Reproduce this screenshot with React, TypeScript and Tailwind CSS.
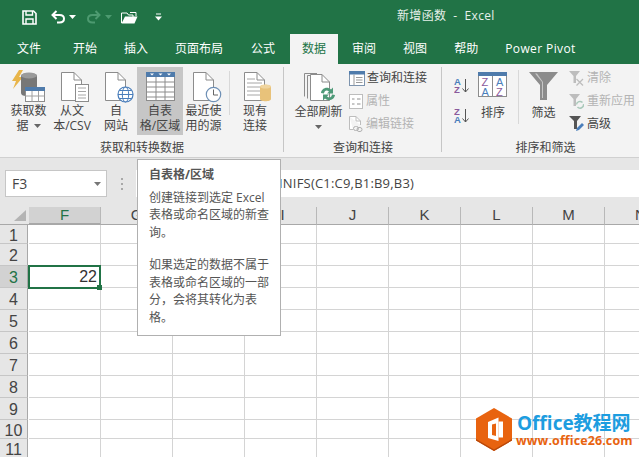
import React from "react";

const FONT = "font-['Open_Sans','Noto_Sans_CJK_SC',sans-serif]";

function Page({ lines = false }: { lines?: boolean }) {
  return (
    <>
      <path d="M.5.5H13L20.5 8V28.5H.5Z" fill="#fff" stroke="#8c8c8c" />
      <path d="M13 .5V8H20.5" fill="none" stroke="#8c8c8c" />
      {lines && <path d="M3 7H11M3 11H18M3 15H18M3 19H18M3 23H18" stroke="#a6a6a6" />}
    </>
  );
}

const Arrow = ({ c = "#666" }: { c?: string }) => (
  <svg width="7" height="4" viewBox="0 0 7 4" className="inline-block">
    <path d="M0 0H7L3.500 4Z" fill={c} />
  </svg>
);

function DataIcon() {
  return (
    <svg width="33" height="32" viewBox="0 0 33 32" className="-mt-[2px]">
      <path d="M7 0L0 11H4L1 19L11 7H7L11 0Z" fill="#e8b54a" />
      <path d="M9 6C9 2 25 2 25 6V26H14C11 26 9 25 9 23Z" fill="#777" />
      <ellipse cx="17" cy="5.500" rx="8" ry="3" fill="#9a9a9a" />
      <rect x="13.500" y="17.500" width="19" height="14" fill="#fff" stroke="#8c8c8c" />
      <rect x="13" y="17" width="20" height="4" fill="#4f7bab" />
      <path d="M13.500 26H32.500M20 21V31.500M26.500 21V31.500" stroke="#a0a0a0" />
    </svg>
  );
}

function FileIcon() {
  return (
    <svg width="29" height="31" viewBox="0 0 29 31" className="ml-[6px]">
      <Page />
      <rect x="14.500" y="12.500" width="13" height="17" fill="#fff" stroke="#8c8c8c" />
      <path d="M17 16H25M17 19.500H25M17 23H25M17 26H25" stroke="#a6a6a6" />
    </svg>
  );
}

function WebIcon() {
  return (
    <svg width="29" height="31" viewBox="0 0 29 31" className="ml-[7px]">
      <Page />
      <circle cx="20.500" cy="22.500" r="7.500" fill="#fff" stroke="#4a7ebb" strokeWidth="1.200" />
      <ellipse cx="20.500" cy="22.500" rx="3.200" ry="7.500" fill="none" stroke="#4a7ebb" />
      <path d="M13 22.500H28M14.500 18.500H26.500M14.500 26.500H26.500" stroke="#4a7ebb" />
    </svg>
  );
}

function TableIcon() {
  return (
    <svg width="29" height="29" viewBox="0 0 29 29">
      <rect x=".5" y=".5" width="28" height="28" fill="#fff" stroke="#8c8c8c" />
      <rect x="0" y="0" width="29" height="5" fill="#4f7bab" />
      <path d="M4 1.500H8L6 3.500ZM12.500 1.500H16.500L14.500 3.500ZM21 1.500H25L23 3.500Z" fill="#fff" />
      <path d="M.5 10H28.500M.5 15H28.500M.5 20H28.500M.5 25H28.500M10 5V28.500M19 5V28.500" stroke="#8c8c8c" />
    </svg>
  );
}

function RecentIcon() {
  return (
    <svg width="29" height="31" viewBox="0 0 29 31" className="ml-[8px]">
      <Page />
      <circle cx="20.500" cy="22.500" r="7.200" fill="#fff" stroke="#6d8fb5" strokeWidth="1.200" />
      <path d="M20.500 17.500V23H25" fill="none" stroke="#666" />
    </svg>
  );
}

function ExistingIcon() {
  return (
    <svg width="28" height="30" viewBox="0 0 28 30" className="ml-[6px]">
      <Page lines />
      <path d="M16 15C16 12 27 12 27 15V27C27 30 16 30 16 27Z" fill="#e8c27a" />
      <ellipse cx="21.500" cy="14.500" rx="5.500" ry="2" fill="#f0d59f" />
    </svg>
  );
}

function RefreshAllIcon() {
  return (
    <svg width="36" height="32" viewBox="0 0 36 32">
      <path d="M3.500 24.500V1.500H16" fill="none" stroke="#8c8c8c" />
      <path d="M6.500 26.500V3.500H18" fill="none" stroke="#8c8c8c" />
      <g transform="translate(9 1)">
        <path d="M.5 1.500H12L19.500 9V27.500H.5Z" fill="#fff" stroke="#8c8c8c" />
        <path d="M12 1.500V9H19.500" fill="none" stroke="#8c8c8c" />
      </g>
      <path d="M20 21C20.500 16.500 26 14 30 17.500L32 15.500V21.500H26L28 19.500C25.500 17.500 23.500 18.500 23 21.500Z" fill="#4e9a78" />
      <path d="M34 23C33.500 27.500 28 30 24 26.500L22 28.500V22.500H28L26 24.500C28.500 26.500 30.500 25.500 31 22.500Z" fill="#4e9a78" />
    </svg>
  );
}

function QueryIcon() {
  return (
    <svg width="16" height="15" viewBox="0 0 16 15">
      <rect x=".5" y=".5" width="15" height="14" fill="#fff" stroke="#7d94ae" />
      <rect x="0" y="0" width="16" height="3.500" fill="#4f7bab" />
      <path d="M7 6.500H13.500M7 9H13.500M7 11.500H13.500M5 3.500V14.500" stroke="#999" />
    </svg>
  );
}

function PropIcon() {
  return (
    <svg width="14" height="15" viewBox="0 0 14 15">
      <rect x=".5" y=".5" width="13" height="14" fill="#fff" stroke="#bdbdbd" />
      <path d="M3 5H5.500M8 5H11.500M3 10H5.500M8 10H11.500" stroke="#b5b5b5" strokeWidth="1.300" />
    </svg>
  );
}

function LinkEditIcon() {
  return (
    <svg width="14" height="16" viewBox="0 0 14 16">
      <path d="M.5.5H7L11.500 5V9M4 13.500H.5V.5" fill="#fff" stroke="#bdbdbd" />
      <path d="M7 .5V5H11.500" fill="none" stroke="#bdbdbd" />
      <rect x="4.500" y="10.500" width="5" height="4" rx="2" fill="none" stroke="#b0b0b0" />
      <rect x="8" y="11.500" width="5" height="4" rx="2" fill="none" stroke="#b0b0b0" />
    </svg>
  );
}

function SortAZ({ flip = false }: { flip?: boolean }) {
  const top = flip ? "Z" : "A";
  const bottom = flip ? "A" : "Z";
  return (
    <svg width="16" height="18" viewBox="0 0 16 18" className="font-['Liberation_Sans',sans-serif]">
      <text x="0" y="8" fontSize="9.500" fontWeight="700" fill={flip ? "#8a5a9c" : "#4a7ebb"}>{top}</text>
      <text x="0" y="16" fontSize="9.500" fontWeight="700" fill={flip ? "#4a7ebb" : "#8a5a9c"}>{bottom}</text>
      <path d="M11.500 2V15M8.500 11.500L11.500 15L14.500 11.500" fill="none" stroke="#555" />
    </svg>
  );
}

function SortIcon() {
  return (
    <svg width="30" height="25" viewBox="0 0 30 25" className="font-['Liberation_Sans',sans-serif]">
      <rect x=".5" y=".5" width="28" height="24" fill="#fff" stroke="#8c8c8c" />
      <rect x="0" y="0" width="29" height="4" fill="#4f7bab" />
      <path d="M14.500 4V24.500" stroke="#8c8c8c" />
      <text x="3.500" y="14" fontSize="11" fill="#8a5a9c">Z</text>
      <text x="3.500" y="23.500" fontSize="11" fill="#4a7ebb">A</text>
      <text x="18" y="14" fontSize="11" fill="#4a7ebb">A</text>
      <text x="18" y="23.500" fontSize="11" fill="#8a5a9c">Z</text>
    </svg>
  );
}

function FunnelIcon() {
  return (
    <svg width="29" height="28" viewBox="0 0 29 28">
      <path d="M0 0H29L18 13V28H11V13Z" fill="#8c8c8c" />
      <path d="M6 1.500L13 10V26H14V10L8 1.500Z" fill="#c6c6c6" />
    </svg>
  );
}

function ClearIcon() {
  return (
    <svg width="15" height="15" viewBox="0 0 15 15">
      <path d="M0 0H11L7 5V12H4.500V5Z" fill="#bdbdbd" />
      <path d="M7.500 8L14 14.500M14 8L7.500 14.500" stroke="#bdbdbd" strokeWidth="1.300" />
    </svg>
  );
}

function ReapplyIcon() {
  return (
    <svg width="15" height="15" viewBox="0 0 15 15">
      <path d="M0 0H11L7 5V12H4.500V5Z" fill="#bdbdbd" />
      <path d="M7.500 10.500A3.500 3.500 0 0 1 13.500 8.500M14.500 10A3.500 3.500 0 0 1 8.500 13" fill="none" stroke="#a9c9ba" strokeWidth="1.500" />
    </svg>
  );
}

function AdvancedIcon() {
  return (
    <svg width="15" height="16" viewBox="0 0 15 16">
      <path d="M0 0H12L8 5V13H5V5Z" fill="#555" />
      <path d="M7 15L8 12L13 7L15 9L10 14Z" fill="#4a7ebb" />
    </svg>
  );
}

function RibbonButton({
  icon,
  lines,
  arrow,
  className,
  iconH = "h-[36px]",
}: {
  icon: React.ReactNode;
  lines: React.ReactNode[];
  arrow?: boolean;
  className: string;
  iconH?: string;
}) {
  return (
    <div className={`flex flex-col items-center h-[68px] shrink-0 ${className}`}>
      <div className={`pt-[5px] flex justify-center ${iconH}`}>{icon}</div>
      {lines.map((l, i) => (
        <div key={i} className="h-[15px] leading-[15px] text-[12px] text-[#444] whitespace-nowrap">
          {l}
        </div>
      ))}
      {arrow && (
        <div className="h-[15px] flex items-center">
          <Arrow />
        </div>
      )}
    </div>
  );
}

function SmallRow({
  icon,
  text,
  disabled,
  gap,
}: {
  icon: React.ReactNode;
  text: string;
  disabled?: boolean;
  gap: string;
}) {
  return (
    <div className={`h-[23.500px] flex items-center text-[12px] whitespace-nowrap ${gap} ${disabled ? "text-[#b4b4b4]" : "text-[#444]"}`}>
      <div className="flex items-center">{icon}</div>
      <span>{text}</span>
    </div>
  );
}

function GroupLabel({ text, className = "" }: { text: string; className?: string }) {
  return (
    <div className={`h-[18px] mt-[4px] leading-[18px] text-center text-[12px] text-[#444] whitespace-nowrap ${className}`}>
      {text}
    </div>
  );
}

const TABS = [
  { t: "文件", c: "ml-[17px]" },
  { t: "开始", c: "ml-[32px]" },
  { t: "插入", c: "ml-[27px]" },
  { t: "页面布局", c: "ml-[27px]" },
  { t: "公式", c: "ml-[28px]" },
  { t: "数据", c: "ml-[15px] px-[12px] bg-[#f3f3f3] !text-[#217346]" },
  { t: "审阅", c: "ml-[14px]" },
  { t: "视图", c: "ml-[27px]" },
  { t: "帮助", c: "ml-[27px]" },
  { t: "Power Pivot", c: "ml-[27px] tracking-[0.4px]" },
];

const COLS = [
  { k: "F", l: "F", c: "w-[72px] bg-[#d2d2d2] border-b-2 border-b-[#217346] text-[#217346]" },
  { k: "G", l: "G", c: "w-[72px]" },
  { k: "H", l: "", c: "w-[72px]" },
  { k: "I", l: "I", c: "w-[72px] pl-[4px] text-[#4a7ebb]" },
  { k: "J", l: "J", c: "w-[72px]" },
  { k: "K", l: "K", c: "w-[72px]" },
  { k: "L", l: "L", c: "w-[72px]" },
  { k: "M", l: "M", c: "w-[72px]" },
  { k: "N", l: "N", c: "w-[72px]" },
];

const ROWS = [
  { n: 1, h: "h-[19px]" },
  { n: 2, h: "h-[22px]" },
  { n: 3, h: "h-[22px]" },
  { n: 4, h: "h-[22px]" },
  { n: 5, h: "h-[22px]" },
  { n: 6, h: "h-[22px]" },
  { n: 7, h: "h-[22px]" },
  { n: 8, h: "h-[22px]" },
  { n: 9, h: "h-[22px]" },
  { n: 10, h: "h-[19px]" },
  { n: 11, h: "h-[19px]" },
];

export default function App() {
  return (
    <div className={`relative w-[639px] h-[457px] overflow-hidden bg-white ${FONT}`}>
      {/* Title bar */}
      <div className="h-[34px] bg-[#217346] flex items-center text-white">
        <svg width="15" height="15" viewBox="0 0 15 15" className="ml-[22px]">
          <path d="M1 1H11.500L14 3.500V14H1Z" fill="none" stroke="#fff" strokeWidth="1.600" />
          <path d="M4 1V5H10.500V1" fill="none" stroke="#fff" strokeWidth="1.400" />
          <path d="M4 14V9H11V14" fill="none" stroke="#fff" strokeWidth="1.400" />
        </svg>
        <svg width="15" height="14" viewBox="0 0 15 14" className="ml-[14px]">
          <path d="M5.500 1L1.500 5L5.500 9" fill="none" stroke="#fff" strokeWidth="2" />
          <path d="M2 5H8.500C14.500 5 14.500 12.500 8.500 12.500H6" fill="none" stroke="#fff" strokeWidth="2" />
        </svg>
        <div className="ml-[3px] flex"><Arrow c="#fff" /></div>
        <svg width="15" height="14" viewBox="0 0 15 14" className="ml-[10px]">
          <path d="M9.500 1L13.500 5L9.500 9" fill="none" stroke="#4d9a70" strokeWidth="2" />
          <path d="M13 5H6.500C.5 5 .5 12.500 6.500 12.500H9" fill="none" stroke="#4d9a70" strokeWidth="2" />
        </svg>
        <div className="ml-[4px] flex"><Arrow c="#4d9a70" /></div>
        <svg width="17" height="14" viewBox="0 0 17 14" className="ml-[9px]">
          <path d="M.5 13V3H6L7.500 5H12V7" fill="none" stroke="#fff" />
          <path d="M.5 13.500H13.500L16.500 6.500H4Z" fill="#fff" />
          <path d="M9 2.500H15V6" fill="none" stroke="#fff" />
        </svg>
        <svg width="7" height="8" viewBox="0 0 7 8" className="ml-[17px]">
          <path d="M1 1H6" stroke="#fff" />
          <path d="M0 3.500H7L3.500 7.500Z" fill="#fff" />
        </svg>
        <div className="ml-[235px] -mt-[3px] text-[12px] tracking-[0.35px] text-[#e6f0ea] whitespace-pre">新增函数  -  Excel</div>
      </div>

      {/* Tabs */}
      <div className="h-[30px] bg-[#217346] flex text-[12px] text-white">
        {TABS.map((t) => (
          <div key={t.t} className={`h-[30px] leading-[29px] whitespace-nowrap ${t.c}`}>
            {t.t}
          </div>
        ))}
      </div>

      {/* Ribbon */}
      <div className="h-[94px] bg-[#f3f3f3] border-b border-b-[#d0d0d0] flex">
        <div className="w-[284px] shrink-0 pt-[3px] relative after:absolute after:right-0 after:top-[3px] after:bottom-[5px] after:w-px after:bg-[#c6c6c6]">
          <div className="flex pl-[5px]">
            <RibbonButton
              className="w-[47px]"
              icon={<DataIcon />}
              lines={[
                "获取数",
                <span className="flex items-center gap-[5px]" key="a">
                  据 <Arrow />
                </span>,
              ]}
            />
            <RibbonButton className="w-[40px]" icon={<FileIcon />} lines={["从文", "本/CSV"]} />
            <RibbonButton className="ml-[3px] w-[42px]" icon={<WebIcon />} lines={["自", "网站"]} />
            <RibbonButton className="w-[46px] bg-[#c6c6c6]" icon={<TableIcon />} lines={["自表", "格/区域"]} />
            <RibbonButton className="w-[41px]" icon={<RecentIcon />} lines={["最近使", "用的源"]} />
            <div className="ml-[5px] mt-[4px] w-px h-[44px] bg-[#d8d8d8]" />
            <RibbonButton className="ml-[5px] w-[40px]" icon={<ExistingIcon />} lines={["现有", "连接"]} />
          </div>
          <GroupLabel text="获取和转换数据" />
        </div>

        <div className="w-[158px] shrink-0 pt-[3px] relative after:absolute after:right-0 after:top-[3px] after:bottom-[5px] after:w-px after:bg-[#c6c6c6]">
          <div className="flex">
            <RibbonButton className="ml-[10px] w-[49px]" iconH="h-[37px]" icon={<RefreshAllIcon />} lines={["全部刷新"]} arrow />
            <div className="ml-[6px] flex flex-col h-[68px]">
              <SmallRow gap="gap-[2px]" icon={<QueryIcon />} text="查询和连接" />
              <SmallRow gap="gap-[3px]" disabled icon={<PropIcon />} text="属性" />
              <SmallRow gap="gap-[3px]" disabled icon={<LinkEditIcon />} text="编辑链接" />
            </div>
          </div>
          <GroupLabel text="查询和连接" />
        </div>

        <div className="flex-1 pt-[3px]">
          <div className="flex">
            <div className="ml-[12px] w-[16px] flex flex-col pt-[10px] gap-[12px]">
              <SortAZ />
              <SortAZ flip />
            </div>
            <RibbonButton className="ml-[8px] w-[30px]" iconH="h-[38px]" icon={<SortIcon />} lines={["排序"]} />
            <div className="ml-[10px] mt-[3px] w-px h-[54px] bg-[#d8d8d8]" />
            <RibbonButton className="ml-[10px] w-[29px]" iconH="h-[38px]" icon={<FunnelIcon />} lines={["筛选"]} />
            <div className="ml-[11px] flex flex-col h-[68px]">
              <SmallRow gap="gap-[3px]" disabled icon={<ClearIcon />} text="清除" />
              <SmallRow gap="gap-[3px]" disabled icon={<ReapplyIcon />} text="重新应用" />
              <SmallRow gap="gap-[3px]" icon={<AdvancedIcon />} text="高级" />
            </div>
          </div>
          <GroupLabel text="排序和筛选" className="pl-[10px]" />
        </div>
      </div>

      {/* Formula bar */}
      <div className="h-[49px] bg-[#e6e6e6] flex pt-[12px] pl-[5px]">
        <div className="w-[102px] h-[27px] bg-white border border-[#c6c6c6] flex items-center justify-between pl-[6px] pr-[5px] text-[14px] text-[#444]">
          <span>F3</span>
          <Arrow c="#777" />
        </div>
        <div className="ml-[14px] h-[27px] flex flex-col justify-center gap-[3px]">
          <div className="w-[2px] h-[2px] bg-[#a8a8a8]" />
          <div className="w-[2px] h-[2px] bg-[#a8a8a8]" />
          <div className="w-[2px] h-[2px] bg-[#a8a8a8]" />
        </div>
        <div className="ml-[13px] flex-1 h-[27px] bg-white flex items-center text-[13px] text-[#444] whitespace-nowrap">
          <span className="ml-[143px] tracking-[0.2px]">INIFS(C1:C9,B1:B9,B3)</span>
        </div>
      </div>

      {/* Sheet */}
      <div className="font-['Liberation_Sans',sans-serif]">
        <div className="flex h-[18px] bg-[#e6e6e6]">
          <div className="w-[29px] shrink-0 border-b border-b-[#a8a8a8] flex items-end justify-end pr-[3px] pb-[3px]">
            <svg width="12" height="11" viewBox="0 0 12 11">
              <path d="M12 0V11H0Z" fill="#b4b4b4" />
            </svg>
          </div>
          {COLS.map((c) => (
            <div
              key={c.k}
              className={`shrink-0 flex items-center justify-center text-[15px] text-[#444] border-r border-r-[#b8b8b8] border-b border-b-[#a8a8a8] ${c.c}`}
            >
              {c.l}
            </div>
          ))}
        </div>
        {ROWS.map((r) => (
          <div key={r.n} className={`flex ${r.h}`}>
            <div
              className={`w-[28px] shrink-0 mr-px pt-[3px] flex items-center justify-center text-[16px] leading-[16px] border-r border-r-[#a8a8a8] border-b border-b-[#c6c6c6] ${
                r.n === 3 ? "bg-[#d2d2d2] text-[#217346]" : "bg-[#e6e6e6] text-[#444]"
              }`}
            >
              {r.n}
            </div>
            {COLS.map((c) => (
              <div key={c.k} className="w-[72px] shrink-0 border-r border-b border-[#d4d4d4] relative">
                {r.n === 3 && c.k === "F" && (
                  <div className="absolute left-[-1px] top-[-1px] w-[73px] h-[24px] border-2 border-[#217346] flex items-center justify-end pr-[2px] text-[16px] text-[#333] bg-white z-10">
                    22
                    <div className="absolute right-[-3px] bottom-[-3px] w-[5px] h-[5px] bg-[#217346]" />
                  </div>
                )}
              </div>
            ))}
          </div>
        ))}
      </div>

      {/* Tooltip */}
      <div className="absolute left-[137px] top-[159px] w-[144px] h-[177px] bg-white border border-[#b0b0b0] pl-[11px] pt-[6px] text-[12px] leading-[17.500px] text-[#555] whitespace-nowrap z-20">
        <div className="font-bold text-[#555] mb-[5px]">自表格/区域</div>
        <div>创建链接到选定 Excel</div>
        <div>表格或命名区域的新查</div>
        <div>询。</div>
        <div className="h-[15px]" />
        <div>如果选定的数据不属于</div>
        <div>表格或命名区域的一部</div>
        <div>分，会将其转化为表</div>
        <div>格。</div>
      </div>

      {/* Watermark */}
      <div className="absolute left-[476px] top-[408px] flex z-30">
        <svg width="36" height="43" viewBox="0 0 36 43">
          <path d="M18 0L36 10.500V32.500L18 43L0 32.500V10.500Z" fill="#e8630f" />
          <path d="M0 31L18 41.500L36 31V32.500L18 43L0 32.500Z" fill="#b8480a" />
          <path d="M22.500 9.500V33L12 30V14Z" fill="#fff" />
          <path d="M22.500 13.500H27V29.500H22.500Z" fill="#fff" />
          <path d="M16 16.500L20 15.500V28L16 27Z" fill="#e8630f" />
        </svg>
        <div className="ml-[5px] flex flex-col font-bold">
          <div className="mt-[4px] h-[23px] leading-[23px] text-[19px] text-[#1d9de0] whitespace-nowrap">Office教程网</div>
          <div className="h-[12px] leading-[12px] text-[12.500px] tracking-[0.1px] -ml-[1px] text-[#e8630f] whitespace-nowrap">www.office26.com</div>
        </div>
      </div>
    </div>
  );
}
